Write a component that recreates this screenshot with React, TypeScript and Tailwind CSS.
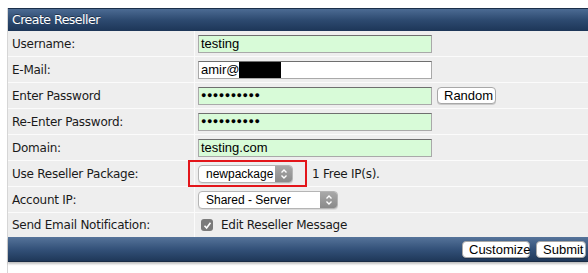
import React from 'react';

type RowProps = {
  label: string;
  last?: boolean;
  children?: React.ReactNode;
};

const Row: React.FC<RowProps> = ({ label, last, children }) => (
  <div className={`flex ${last ? 'h-[24px]' : 'h-[26px] border-b border-[#fbfbfb]'}`}>
    <div className="w-[187px] shrink-0 border-r border-[#fbfbfb] pl-[4px] flex items-center text-[12px] text-[#1a1a1a] font-['DejaVu_Sans',sans-serif] tracking-[-0.25px]">
      {label}
    </div>
    <div className="flex-1 flex items-center pl-[3px]">{children}</div>
  </div>
);

const TextInput: React.FC<{ value: string; green?: boolean; password?: boolean; children?: React.ReactNode }> = ({
  value,
  green,
  password,
  children,
}) => (
  <div
    className={`w-[234px] h-[18px] border border-[#a9a9a9] border-t-[#6f6f6f] flex items-center pl-[2px] text-[13px] text-black font-['Liberation_Sans',sans-serif] ${
      green ? 'bg-[#d8fbd8]' : 'bg-white'
    }`}
  >
    {password ? <span className="text-[9px] tracking-[0.5px]">{'●●●●●●●●●●'}</span> : value}
    {children}
  </div>
);

const SelectBox: React.FC<{ value: string; width: string }> = ({ value, width }) => (
  <div
    className={`${width} h-[18px] rounded-[4px] border border-[#b5b5b5] bg-white flex items-center shadow-[0_1px_0_rgba(0,0,0,0.08)] overflow-hidden`}
  >
    <span className="flex-1 pl-[7px] text-[12px] text-black font-['Liberation_Sans',sans-serif]">{value}</span>
    <span className="w-[17px] h-full bg-gradient-to-b from-[#a9a9a9] to-[#8a8a8a] flex items-center justify-center">
      <svg width="8" height="12" viewBox="0 0 8 12" fill="none" stroke="white" strokeWidth="1.4">
        <path d="M1.5 4.5 L4 2 L6.5 4.5" />
        <path d="M1.5 7.5 L4 10 L6.5 7.5" />
      </svg>
    </span>
  </div>
);

const MacButton: React.FC<{ label: string; className?: string }> = ({ label, className }) => (
  <button
    className={`h-[17px] rounded-[4px] border border-[#a8a8a8] bg-white px-[6px] text-[13px] leading-none text-black font-['Liberation_Sans',sans-serif] shadow-[0_1px_0_rgba(0,0,0,0.15)] ${className ?? ''}`}
  >
    {label}
  </button>
);

export default function App() {
  return (
    <div className="w-[588px] h-[273px] bg-white overflow-hidden pt-[8px] pl-[7px]">
      <div className="h-full border-l border-[#d6d6d6] flex flex-col">
        {/* Header */}
        <div className="h-[23px] border-t border-[#1b2f4b] bg-gradient-to-b from-[#4c6b93] via-[#2d4a70] to-[#1d3658] flex items-center pl-[4px] text-[12.5px] text-white font-['DejaVu_Sans',sans-serif] tracking-[-0.5px] [text-shadow:0_-1px_0_rgba(0,0,0,0.4)] shadow-[0_1px_0_#111]">
          Create Reseller
        </div>

        {/* Form rows */}
        <div className="bg-[#eeeeee]">
          <Row label="Username:">
            <TextInput value="testing" green />
          </Row>
          <Row label="E-Mail:">
            <TextInput value="amir@">
              <span className="inline-block w-[42px] h-[16px] bg-black" />
            </TextInput>
          </Row>
          <Row label="Enter Password">
            <TextInput value="" green password />
            <MacButton label="Random" className="ml-[5px] w-[59px]" />
          </Row>
          <Row label="Re-Enter Password:">
            <TextInput value="" green password />
          </Row>
          <Row label="Domain:">
            <TextInput value="testing.com" green />
          </Row>
          <Row label="Use Reseller Package:">
            <div className="-ml-[10px] h-[27px] w-[119px] border-2 border-[#e3151a] flex items-center pl-[8px]">
              <SelectBox value="newpackage" width="w-[95px]" />
            </div>
            <span className="ml-[5px] text-[12px] text-[#1a1a1a] font-['DejaVu_Sans',sans-serif] tracking-[-0.25px]">
              1 Free IP(s).
            </span>
          </Row>
          <Row label="Account IP:">
            <SelectBox value="Shared - Server" width="w-[140px]" />
          </Row>
          <Row label="Send Email Notification:" last>
            <span className="ml-[3px] w-[12px] h-[12px] rounded-[3px] bg-[#7b7b7b] flex items-center justify-center">
              <svg width="9" height="9" viewBox="0 0 9 9" fill="none" stroke="white" strokeWidth="1.6">
                <path d="M1.5 4.8 L3.6 7 L7.5 1.8" />
              </svg>
            </span>
            <span className="ml-[8px] text-[12px] text-[#1a1a1a] font-['DejaVu_Sans',sans-serif] tracking-[-0.25px]">
              Edit Reseller Message
            </span>
          </Row>
        </div>

        {/* Footer */}
        <div className="h-[25px] bg-gradient-to-b from-[#56749a] via-[#34527a] to-[#1f3859] border-b border-[#1a2c45] flex items-center justify-end pr-[2px] gap-[6px] shadow-[0_2px_2px_rgba(0,0,0,0.25)]">
          <MacButton label="Customize" className="w-[68px]" />
          <MacButton label="Submit" className="w-[50px]" />
        </div>
      </div>
    </div>
  );
}
